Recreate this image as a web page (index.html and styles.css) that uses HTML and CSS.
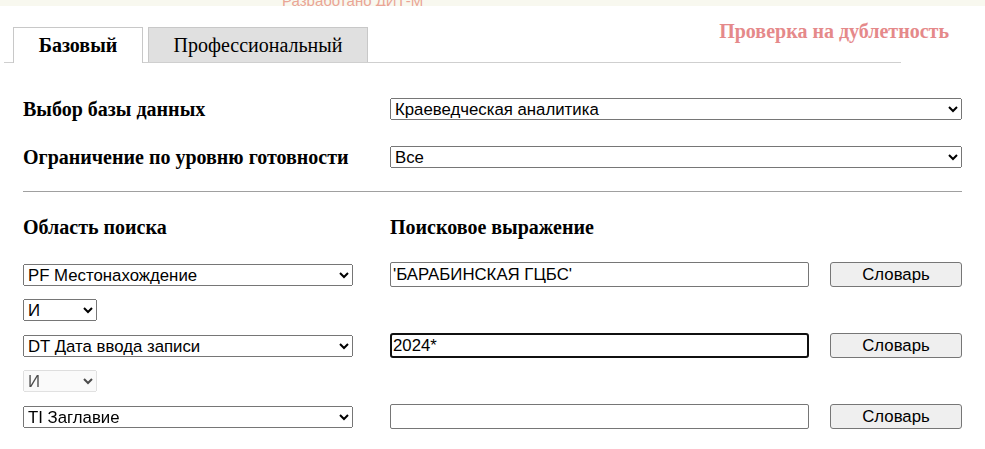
FILE: index.html
```html
<!DOCTYPE html>
<html lang="ru">
<head>
  <meta charset="UTF-8">
  <title>Поиск</title>
  <link rel="stylesheet" href="styles.css">
</head>
<body>
  <!-- Credits strip -->
  <div class="credits"><span>Разработано ДИТ-М</span></div>

  <!-- Header: tabs and duplicate check link -->
  <div class="header">
    <ul class="tabs">
      <li class="tab active">Базовый</li>
      <li class="tab">Профессиональный</li>
    </ul>
    <h2 class="dup-check">Проверка на дублетность</h2>
  </div>

  <div class="content">
    <!-- Database settings -->
    <div class="settings">
      <label for="db">Выбор базы данных</label>
      <select id="db" class="wide">
        <option>Краеведческая аналитика</option>
      </select>
      <label for="level">Ограничение по уровню готовности</label>
      <select id="level" class="wide">
        <option>Все</option>
      </select>
    </div>

    <hr>

    <!-- Search rows -->
    <div class="search">
      <div class="col-title">Область поиска</div>
      <div class="col-title">Поисковое выражение</div>
      <div></div>

      <select class="field"><option>PF Местонахождение</option></select>
      <input class="term" type="text" value="'БАРАБИНСКАЯ ГЦБС'">
      <button type="button" class="dict">Словарь</button>

      <select class="logic"><option>И</option></select>

      <select class="field"><option>DT Дата ввода записи</option></select>
      <input class="term focused" type="text" value="2024*" autofocus>
      <button type="button" class="dict">Словарь</button>

      <select class="logic" disabled><option>И</option></select>

      <select class="field"><option>TI Заглавие</option></select>
      <input class="term" type="text" value="">
      <button type="button" class="dict">Словарь</button>
    </div>
  </div>
</body>
</html>
```

FILE: styles.css
```css
/* Base */
body {
  margin: 0;
  font-family: "Liberation Serif", "Times New Roman", serif;
  color: #000;
  background: #fff;
}

/* Credits strip */
.credits {
  height: 6px;
  overflow: hidden;
  background: #f8f8ef;
}

.credits span {
  display: block;
  margin-top: -7px;
  padding-left: 282px;
  font-family: "Liberation Sans", Arial, sans-serif;
  font-size: 15px;
  line-height: 15px;
  color: #eaa595;
}

/* Header */
.header {
  display: grid;
}

.header > * {
  grid-area: 1 / 1;
}

.tabs {
  display: flex;
  align-items: flex-end;
  gap: 5px;
  width: 897px;
  margin: 21px 0 0 4px;
  padding: 0 0 0 9px;
  box-sizing: border-box;
  list-style: none;
  border-bottom: 1px solid #cfcfcf;
}

.tab {
  box-sizing: border-box;
  height: 35px;
  padding-top: 6px;
  border: 1px solid #c8c8c8;
  border-bottom: none;
  background: #e0e0e0;
  font-size: 20px;
  line-height: 22px;
  text-align: center;
  width: 220px;
}

.tab.active {
  width: 130px;
  height: 36px;
  margin-bottom: -1px;
  background: #fff;
  font-weight: bold;
}

.dup-check {
  justify-self: end;
  align-self: start;
  margin: 14px 36px 0 0;
  font-size: 20px;
  line-height: 22px;
  color: #e5898a;
}

/* Content */
.content {
  padding: 0 23px;
}

.settings {
  display: grid;
  grid-template-columns: 367px 572px;
  row-gap: 26px;
  align-items: center;
  margin-top: 35px;
}

.settings label,
.col-title {
  font-size: 20px;
  line-height: 22px;
  font-weight: bold;
}

select,
input,
button {
  font-family: "Liberation Sans", Arial, sans-serif;
  font-size: 16.8px;
  color: #000;
  box-sizing: border-box;
  margin: 0;
}

select {
  height: 22px;
}

select.wide {
  width: 572px;
}

hr {
  margin: 23px 0 0;
  height: 0;
  border: none;
  border-top: 1px solid #a0a0a0;
}

/* Search grid */
.search {
  display: grid;
  grid-template-columns: 367px 440px 132px;
  row-gap: 12px;
  align-items: center;
  margin-top: 24px;
}

.col-title {
  margin-bottom: 12px;
}

select.field {
  grid-column: 1;
  width: 330px;
}

select.logic {
  grid-column: 1 / -1;
  width: 74px;
}

.term {
  width: 419px;
  height: 25px;
  padding: 1px 2px;
  border: 1px solid #767676;
  border-radius: 2px;
}

.term.focused {
  padding: 0 2px 0 1px;
  border: 2px solid #101010;
  border-radius: 3px;
  outline: none;
}

.dict {
  width: 132px;
  height: 25px;
  border: 1px solid #767676;
  border-radius: 3px;
  background: #efefef;
}
```
